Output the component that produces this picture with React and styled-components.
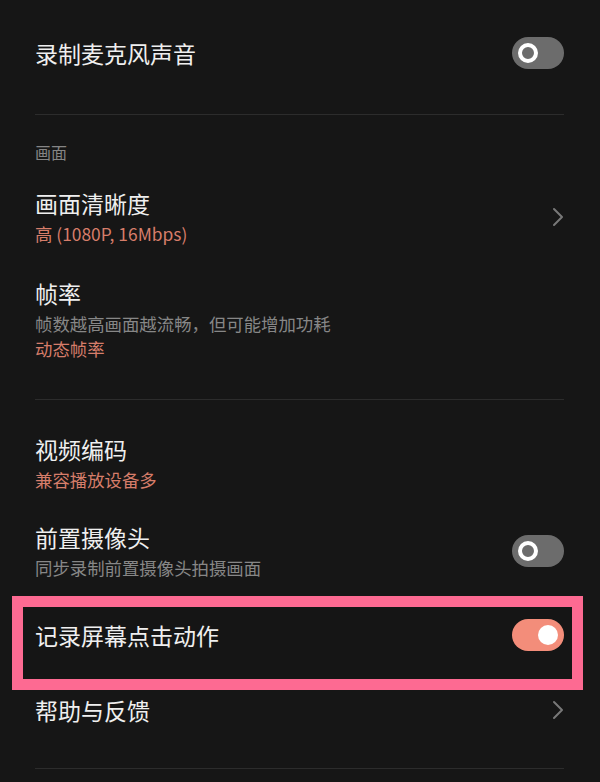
import React from "react";
import styled, { createGlobalStyle } from "styled-components";

const GlobalStyle = createGlobalStyle`
  html, body {
    margin: 0;
    padding: 0;
    background: #161616;
  }
  body {
    font-family: "Noto Sans CJK SC", "Noto Sans", sans-serif;
    -webkit-font-smoothing: antialiased;
  }
`;

const Page = styled.div`
  width: 600px;
  height: 782px;
  overflow: hidden;
  background: #161616;
  padding: 0 36px 0 35px;
  box-sizing: border-box;
  display: flex;
  flex-direction: column;
`;

const Row = styled.div`
  display: flex;
  align-items: center;
  justify-content: space-between;
  gap: 16px;
  margin-top: ${(p) => p.$top || 0}px;
`;

const Title = styled.div`
  font-size: 23px;
  line-height: 30px;
  color: #efefef;
`;

const TextCol = styled.div`
  display: flex;
  flex-direction: column;

  & > ${Title} {
    margin-bottom: 3px;
  }
`;

const Sub = styled.div`
  font-size: 17.4px;
  line-height: 25px;
  color: ${(p) => (p.$accent ? "#d67d6a" : "#878787")};
`;

const SectionHead = styled.div`
  font-size: 16px;
  line-height: 20px;
  color: #858585;
  margin-top: ${(p) => p.$top || 0}px;
`;

const Divider = styled.div`
  height: 1px;
  background: #2c2c2c;
  margin-top: ${(p) => p.$top || 0}px;
`;

const Track = styled.div`
  flex: none;
  width: 52px;
  height: 32px;
  border-radius: 16px;
  background: ${(p) => (p.$on ? "#f38d7a" : "#6c6c6c")};
  display: flex;
  align-items: center;
  justify-content: ${(p) => (p.$on ? "flex-end" : "flex-start")};
  padding: 0 6px;
  box-sizing: border-box;
`;

const Knob = styled.div`
  width: 20px;
  height: 20px;
  border-radius: 50%;
  box-sizing: border-box;
  background: ${(p) => (p.$on ? "#ffffff" : "#6c6c6c")};
  border: ${(p) => (p.$on ? "none" : "4px solid #ffffff")};
`;

const Highlight = styled.div`
  margin: 16px -19px 0 -23px;
  border: 11px solid #fd6a92;
  padding: 12px 8px 28px 12px;
  background: #151515;
`;

const Chevron = styled.svg`
  flex: none;
  width: 12px;
  height: 20px;
`;

function Switch({ on }) {
  return (
    <Track $on={on}>
      <Knob $on={on} />
    </Track>
  );
}

function Arrow() {
  return (
    <Chevron viewBox="0 0 12 20">
      <path
        d="M2 2 L10 10 L2 18"
        fill="none"
        stroke="#787878"
        strokeWidth="2"
        strokeLinecap="round"
        strokeLinejoin="round"
      />
    </Chevron>
  );
}

export default function App() {
  return (
    <>
      <GlobalStyle />
      <Page>
        <Row $top={37}>
          <Title>录制麦克风声音</Title>
          <Switch on={false} />
        </Row>
        <Divider $top={45} />

        <SectionHead $top={27}>画面</SectionHead>

        <Row $top={26}>
          <TextCol>
            <Title>画面清晰度</Title>
            <Sub $accent>高 (1080P, 16Mbps)</Sub>
          </TextCol>
          <Arrow />
        </Row>

        <Row $top={32}>
          <TextCol>
            <Title>帧率</Title>
            <Sub>帧数越高画面越流畅，但可能增加功耗</Sub>
            <Sub $accent>动态帧率</Sub>
          </TextCol>
        </Row>
        <Divider $top={38} />

        <Row $top={34}>
          <TextCol>
            <Title>视频编码</Title>
            <Sub $accent>兼容播放设备多</Sub>
          </TextCol>
        </Row>

        <Row $top={30}>
          <TextCol>
            <Title>前置摄像头</Title>
            <Sub>同步录制前置摄像头拍摄画面</Sub>
          </TextCol>
          <Switch on={false} />
        </Row>

        <Highlight>
          <Row>
            <Title>记录屏幕点击动作</Title>
            <Switch on />
          </Row>
        </Highlight>

        <Row $top={5}>
          <Title>帮助与反馈</Title>
          <Arrow />
        </Row>
        <Divider $top={43} />
      </Page>
    </>
  );
}
